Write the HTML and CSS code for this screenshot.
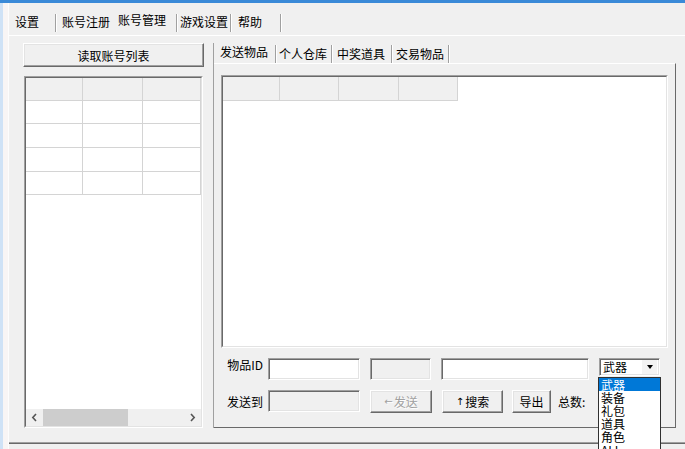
FILE: index.html
```html
<!DOCTYPE html>
<html>
<head>
<meta charset="utf-8">
<link rel="stylesheet" href="styles.css">
</head>
<body>
<div class="titlebar"></div>
<div class="window">
  <div class="frame-edge"></div>
  <div class="client">
    <div class="tabs">
      <span class="tab">设置</span><span class="sep sep-a"></span>
      <span class="tab tab-b">账号注册</span>
      <span class="tab tab-c active">账号管理</span><span class="sep sep-c"></span>
      <span class="tab tab-d">游戏设置</span><span class="sep sep-d"></span>
      <span class="tab tab-e">帮助</span><span class="sep sep-e"></span>
    </div>
    <div class="panel">
      <div class="left">
        <div class="btn btn-read">读取账号列表</div>
        <div class="lv lv-left">
          <div class="lv-in">
            <div class="grid">
              <div class="hc"></div><div class="hc"></div><div class="hc"></div>
              <div class="gc"></div><div class="gc"></div><div class="gc"></div>
              <div class="gc"></div><div class="gc"></div><div class="gc"></div>
              <div class="gc"></div><div class="gc"></div><div class="gc"></div>
              <div class="gc"></div><div class="gc"></div><div class="gc"></div>
            </div>
            <div class="lv-fill"></div>
            <div class="hscroll">
              <div class="sb-btn"><svg width="7" height="9" viewBox="0 0 7 9"><path d="M5 1 L1.8 4.5 L5 8" stroke="#555" stroke-width="1.6" fill="none"/></svg></div>
              <div class="sb-thumb"></div>
              <div class="sb-track"></div>
              <div class="sb-btn"><svg width="7" height="9" viewBox="0 0 7 9"><path d="M2 1 L5.2 4.5 L2 8" stroke="#555" stroke-width="1.6" fill="none"/></svg></div>
            </div>
          </div>
        </div>
      </div>
      <div class="right">
        <div class="itabs">
          <span class="tab active">发送物品</span><span class="sep isep-a"></span>
          <span class="tab itab-b">个人仓库</span><span class="sep isep-b"></span>
          <span class="tab itab-c">中奖道具</span><span class="sep isep-c"></span>
          <span class="tab itab-d">交易物品</span><span class="sep isep-d"></span>
        </div>
        <div class="ipanel">
          <div class="lv lv-items">
            <div class="lv-in">
              <div class="ihead">
                <div class="ihc w57"></div><div class="ihc w59"></div><div class="ihc w60"></div><div class="ihc w59"></div>
              </div>
            </div>
          </div>
          <div class="frow frow1">
            <span class="flabel flabel-top">物品ID</span>
            <div class="edit w92 ml5"></div>
            <div class="edit disabled w61 ml10"></div>
            <div class="edit w148 ml10"></div>
            <div class="combo ml10">
              <span class="combo-text">武器</span>
              <span class="combo-btn"><span class="tri"></span></span>
            </div>
          </div>
          <div class="frow frow2">
            <span class="flabel">发送到</span>
            <div class="edit disabled w92 ml5"></div>
            <div class="btn btn-dis w62 ml10"><span class="arr">←</span>发送</div>
            <div class="btn w61 ml10"><span class="arr">↑</span>搜索</div>
            <div class="btn w39 ml9">导出</div>
            <span class="total">总数:</span>
          </div>
        </div>
      </div>
    </div>
  </div>
</div>
<div class="dropdown">
  <div class="dd-item sel">武器</div>
  <div class="dd-item">装备</div>
  <div class="dd-item">礼包</div>
  <div class="dd-item">道具</div>
  <div class="dd-item">角色</div>
  <div class="dd-item">ALL</div>
</div>
</body>
</html>
```
FILE: styles.css
```css
* { box-sizing: border-box; }
html, body { margin: 0; padding: 0; }
body {
  width: 685px;
  height: 449px;
  overflow: hidden;
  position: relative;
  background: #f0f0f0;
  font-family: "Noto Sans CJK SC", "Noto Sans", sans-serif;
  font-size: 12px;
  color: #000;
}
.titlebar { height: 3px; background: #3a8ad8; }
.window { display: flex; height: 446px; }
.frame-edge {
  width: 8px;
  flex: none;
  background: linear-gradient(to right, #cfe2f6 0, #cfe2f6 3px, #f8f5f5 3px, #f8f5f5 8px);
}
.client {
  flex: 1;
  display: flex;
  flex-direction: column;
  border-left: 1px solid #fdfdfd;
}

/* tab strips */
.tabs {
  height: 32px;
  flex: none;
  display: flex;
  align-items: flex-start;
  padding: 11px 0 0 6px;
}
.tab { height: 16px; line-height: 16px; white-space: nowrap; }
.tab.active { margin-top: -2px; }
.sep {
  width: 2px;
  height: 18px;
  border-left: 1px solid #a0a0a0;
  border-right: 1px solid #fff;
}
.sep-a { margin-left: 16px; }
.tab-b { margin-left: 5px; }
.tab-c { margin-left: 8px; }
.sep-c { margin-left: 10px; }
.tab-d { margin-left: 2px; }
.sep-d { margin-left: 2px; }
.tab-e { margin-left: 6px; }
.sep-e { margin-left: 18px; }

/* outer panel */
.panel {
  height: 409px;
  flex: none;
  display: flex;
  align-items: flex-start;
  gap: 9px;
  padding: 7px 0 0 14px;
  border-top: 1px solid #fff;
  border-bottom: 1px solid #696969;
  box-shadow: inset 0 -1px #a0a0a0;
}
.left {
  width: 181px;
  flex: none;
  display: flex;
  flex-direction: column;
  gap: 9px;
}

/* buttons */
.btn {
  height: 23px;
  display: flex;
  align-items: center;
  justify-content: center;
  background: #f0f0f0;
  border: 1px solid;
  border-color: #fff #696969 #696969 #fff;
  box-shadow: inset -1px -1px #a0a0a0, inset 1px 1px #e3e3e3;
  white-space: nowrap;
  flex: none;
}
.btn-read { height: 24px; }
.btn-dis { color: #a0a0a0; text-shadow: 1px 1px #fff; }
.arr {
  font-family: "DejaVu Sans", sans-serif;
  font-size: 10px;
  margin-right: 1px;
}

/* list views */
.lv {
  border: 1px solid;
  border-color: #a0a0a0 #fff #fff #a0a0a0;
  flex: none;
}
.lv-in {
  height: 100%;
  border: 1px solid;
  border-color: #696969 #e3e3e3 #e3e3e3 #696969;
  background: #fff;
  display: flex;
  flex-direction: column;
}
.lv-left { height: 352px; margin: 0 1px; }
.grid {
  display: grid;
  grid-template-columns: 57px 60px 58px;
  grid-template-rows: 23px 23px 24px 24px 23px;
}
.hc, .gc {
  border-right: 1px solid #d4d4d4;
  border-bottom: 1px solid #d4d4d4;
}
.hc { background: #f0f0f0; }
.lv-fill { flex: 1; }
.hscroll { height: 17px; flex: none; display: flex; background: #f0f0f0; }
.sb-btn {
  width: 17px;
  flex: none;
  display: flex;
  align-items: center;
  justify-content: center;
}
.sb-thumb { width: 85px; flex: none; background: #cdcdcd; }
.sb-track { flex: 1; }

/* right tab control */
.right {
  width: 463px;
  height: 385px;
  flex: none;
  display: flex;
  flex-direction: column;
  border-left: 1px solid #a0a0a0;
}
.itabs {
  height: 20px;
  flex: none;
  display: flex;
  align-items: flex-start;
  padding: 3px 0 0 6px;
}
.itabs .sep { margin-top: -1px; }
.isep-a { margin-left: 7px; }
.itab-b { margin-left: 2px; }
.isep-b { margin-left: 4px; }
.itab-c { margin-left: 4px; }
.isep-c { margin-left: 6px; }
.itab-d { margin-left: 3px; }
.isep-d { margin-left: 4px; }
.ipanel {
  flex: 1;
  display: flex;
  flex-direction: column;
  padding: 11px 7px 0 7px;
  border-top: 1px solid #fff;
  border-right: 1px solid #696969;
  border-bottom: 1px solid #696969;
}
.lv-items { height: 273px; }
.ihead { display: flex; height: 24px; flex: none; }
.ihc {
  background: #f0f0f0;
  border-right: 1px solid #d4d4d4;
  border-bottom: 1px solid #d4d4d4;
  flex: none;
}

/* form rows */
.frow { display: flex; align-items: flex-start; height: 23px; flex: none; }
.frow1 { margin-top: 10px; }
.frow2 { margin-top: 9px; align-items: center; }
.flabel { width: 42px; flex: none; text-align: right; line-height: 16px; white-space: nowrap; }
.flabel-top { margin-top: -1px; }
.edit {
  height: 22px;
  flex: none;
  background: #fff;
  border: 1px solid;
  border-color: #a0a0a0 #fff #fff #a0a0a0;
  box-shadow: inset 1px 1px #696969, inset -1px -1px #e3e3e3;
}
.frow2 .edit { align-self: flex-start; }
.edit.disabled { background: #f0f0f0; }
.w39 { width: 39px; }
.w57 { width: 57px; }
.w59 { width: 59px; }
.w60 { width: 60px; }
.w61 { width: 61px; }
.w62 { width: 62px; }
.w92 { width: 92px; }
.w148 { width: 148px; }
.ml5 { margin-left: 5px; }
.ml9 { margin-left: 9px; }
.ml10 { margin-left: 10px; }
.total { margin-left: 7px; line-height: 16px; white-space: nowrap; }

.combo {
  width: 61px;
  height: 18px;
  flex: none;
  display: flex;
  align-items: center;
  padding: 2px;
  background: #fff;
  border: 1px solid;
  border-color: #a0a0a0 #fff #fff #a0a0a0;
  box-shadow: inset 1px 1px #696969, inset -1px -1px #e3e3e3;
}
.combo-text { flex: 1; line-height: 14px; padding-left: 1px; }
.combo-btn {
  width: 15px;
  height: 14px;
  flex: none;
  display: flex;
  align-items: center;
  justify-content: center;
  background: #f3f3f3;
}
.tri {
  width: 0;
  height: 0;
  border-left: 3.5px solid transparent;
  border-right: 3.5px solid transparent;
  border-top: 4px solid #000;
}

/* open combo drop-down list (overlay) */
.dropdown {
  position: absolute;
  left: 598px;
  top: 377px;
  width: 63px;
  height: 82px;
  background: #fff;
  border: 1px solid #303030;
}
.dd-item { height: 13px; line-height: 13px; padding-left: 2px; white-space: nowrap; }
.dd-item.sel { background: #0078d7; color: #fff; }
```
